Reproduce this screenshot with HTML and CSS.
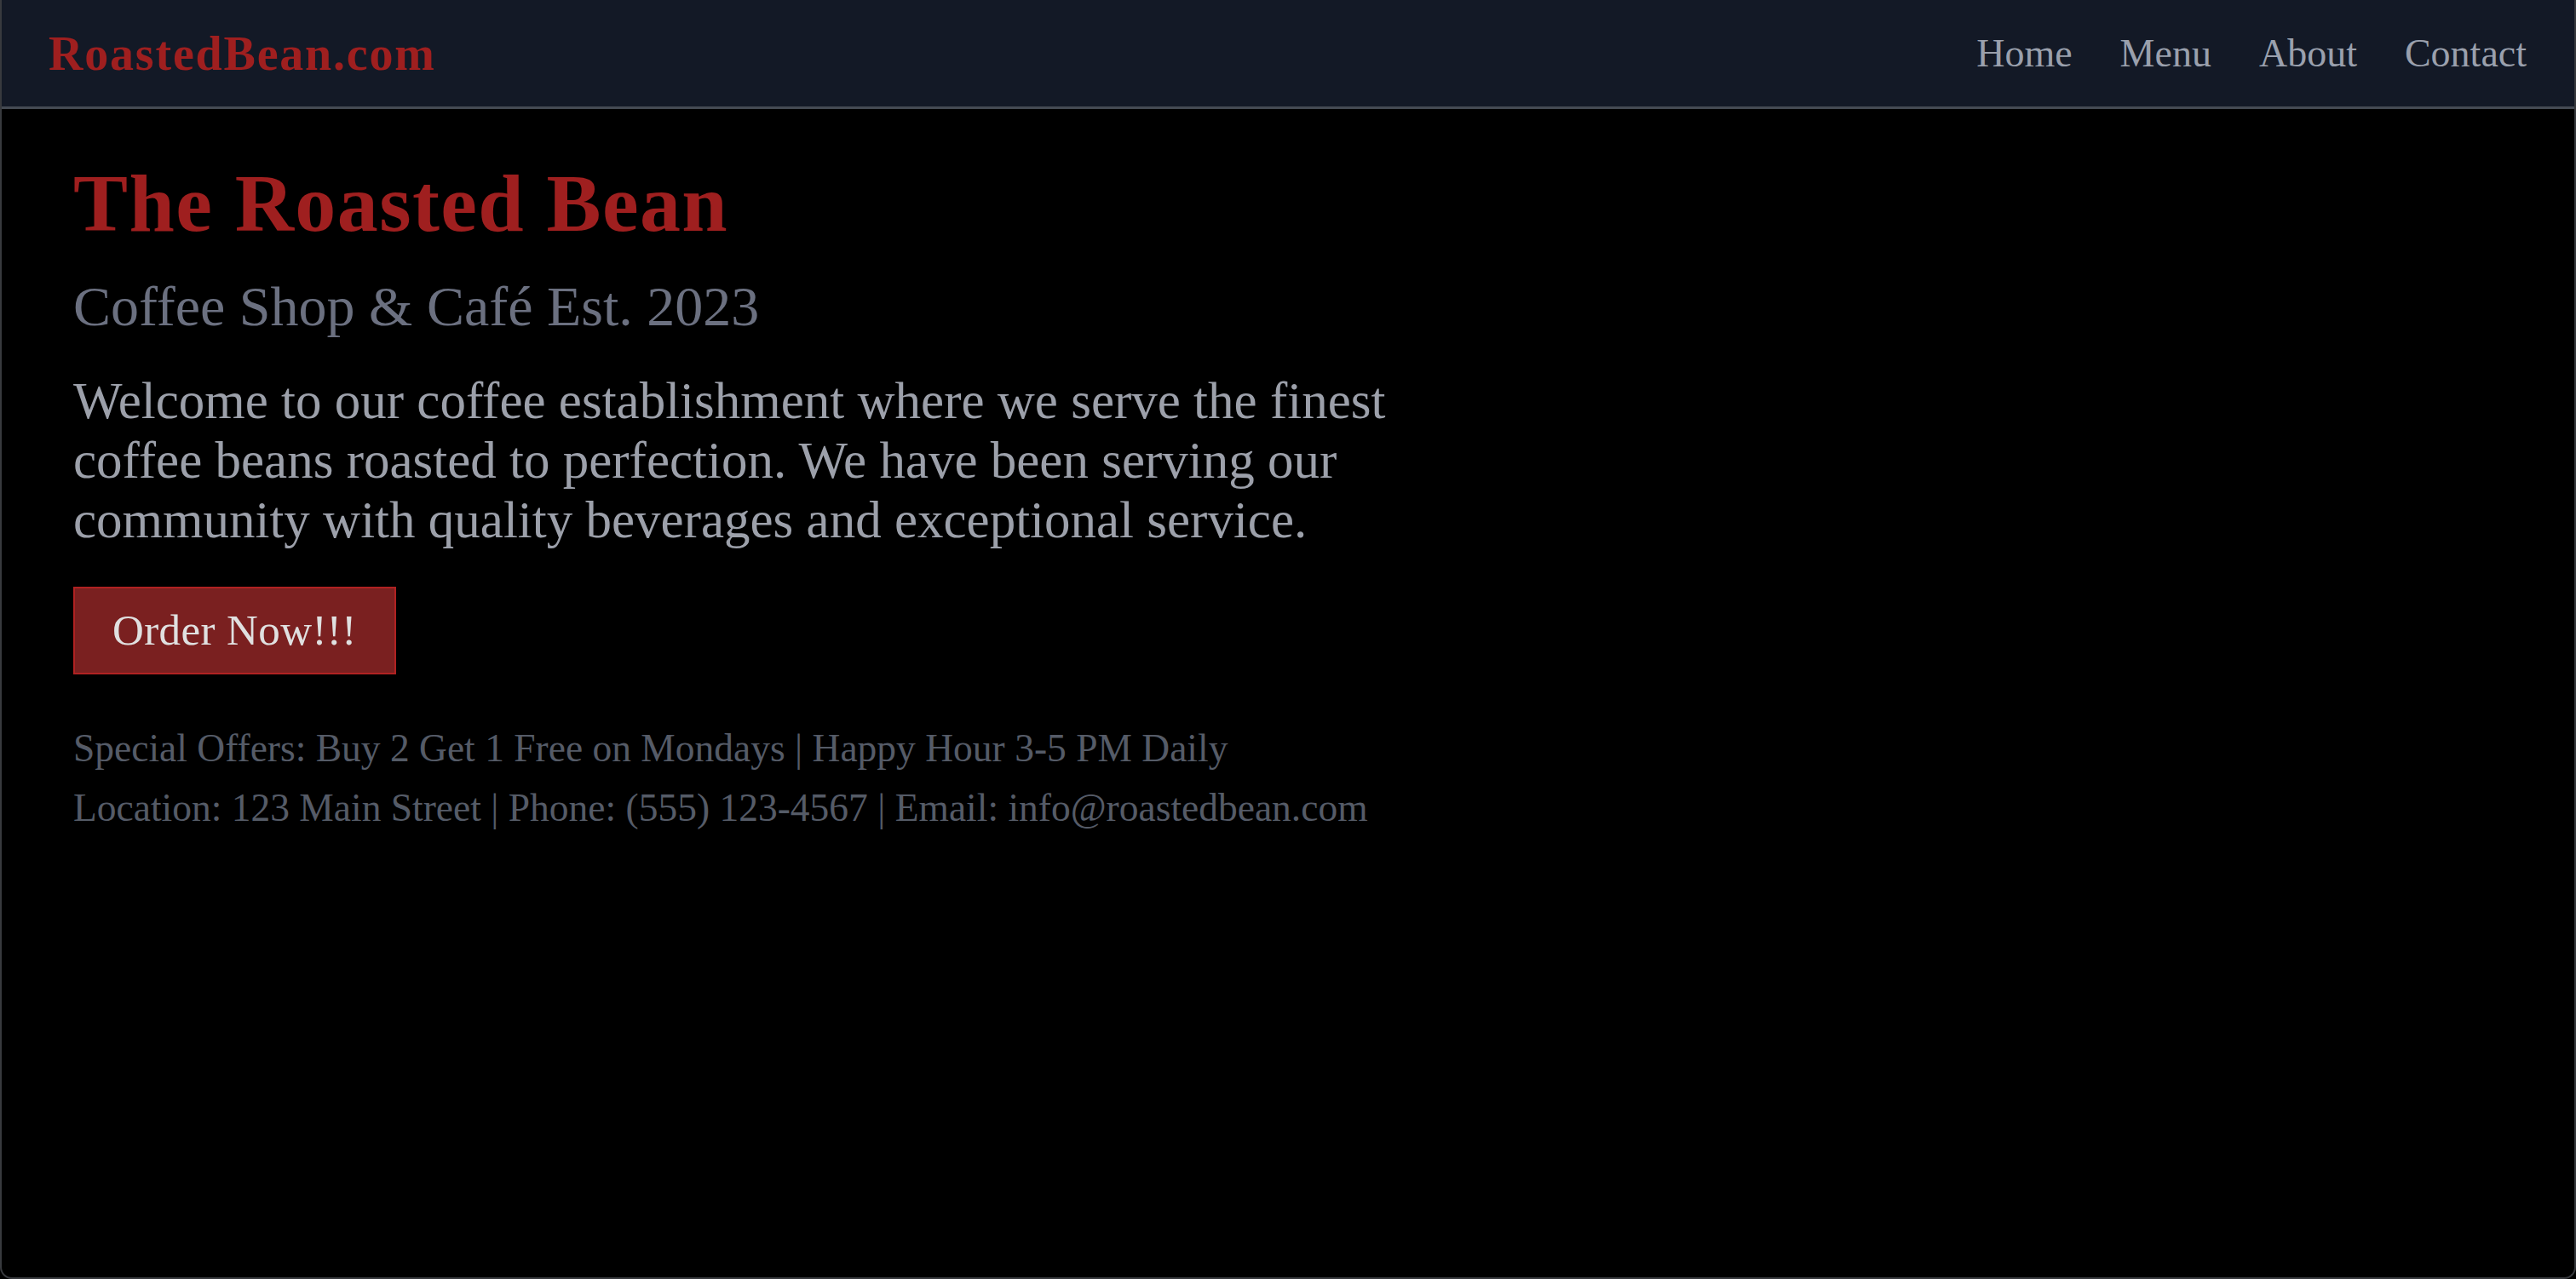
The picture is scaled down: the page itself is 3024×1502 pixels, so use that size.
FILE: index.html
```html
<!DOCTYPE html>
<html lang="en">
<head>
<meta charset="utf-8">
<title>The Roasted Bean</title>
<link rel="stylesheet" href="styles.css">
</head>
<body>
<div class="window">
  <header class="topbar">
    <a class="logo" href="#">RoastedBean.com</a>
    <nav class="nav">
      <a href="#">Home</a>
      <a href="#">Menu</a>
      <a href="#">About</a>
      <a href="#">Contact</a>
    </nav>
  </header>
  <main class="hero">
    <h1 class="title">The Roasted Bean</h1>
    <h2 class="subtitle">Coffee Shop &amp; Café Est. 2023</h2>
    <p class="intro">Welcome to our coffee establishment where we serve the finest coffee beans roasted to perfection. We have been serving our community with quality beverages and exceptional service.</p>
    <button class="order">Order Now!!!</button>
    <div class="info">
      <p>Special Offers: Buy 2 Get 1 Free on Mondays | Happy Hour 3-5 PM Daily</p>
      <p>Location: 123 Main Street | Phone: (555) 123-4567 | Email: info@roastedbean.com</p>
    </div>
  </main>
</div>
</body>
</html>
```
FILE: styles.css
```css
html, body {
  margin: 0;
  padding: 0;
  background: #000;
}
body {
  font-family: "Liberation Serif", "Times New Roman", serif;
}
.window {
  box-sizing: border-box;
  height: 1502px;
  border: 2px solid #383a3e;
  border-top: none;
  border-radius: 0 0 14px 14px;
  background: #000;
  overflow: hidden;
}
.topbar {
  height: 125px;
  background: #131926;
  border-bottom: 3px solid #454a53;
  display: flex;
  align-items: center;
  justify-content: space-between;
  padding: 0 56px 0 55px;
}
.logo {
  color: #9f1f1f;
  font-weight: bold;
  font-size: 56px;
  letter-spacing: 1.8px;
  line-height: 60px;
  text-decoration: none;
}
.nav {
  display: flex;
  gap: 56px;
}
.nav a {
  color: #9aa0ad;
  font-size: 46px;
  line-height: 54px;
  text-decoration: none;
}
.hero {
  padding: 55px 0 0 84px;
}
.title {
  margin: 0;
  color: #9f1f1f;
  font-size: 96px;
  line-height: 112px;
  font-weight: bold;
  letter-spacing: 1.4px;
}
.subtitle {
  margin: 25px 0 0;
  color: #6b7080;
  font-size: 66px;
  line-height: 80px;
  font-weight: normal;
}
.intro {
  margin: 36px 0 0;
  max-width: 1600px;
  color: #9ca0aa;
  font-size: 61px;
  line-height: 70px;
}
.order {
  display: block;
  margin-top: 43px;
  padding: 15px 44px;
  border: 2px solid #b02222;
  background: #7a2020;
  color: #e0e0e0;
  font-family: inherit;
  font-size: 51px;
  line-height: 69px;
  letter-spacing: 0.4px;
}
.info {
  margin-top: 52px;
  color: #555b67;
}
.info p {
  margin: 0;
  font-size: 45.5px;
  line-height: 70px;
}
```
